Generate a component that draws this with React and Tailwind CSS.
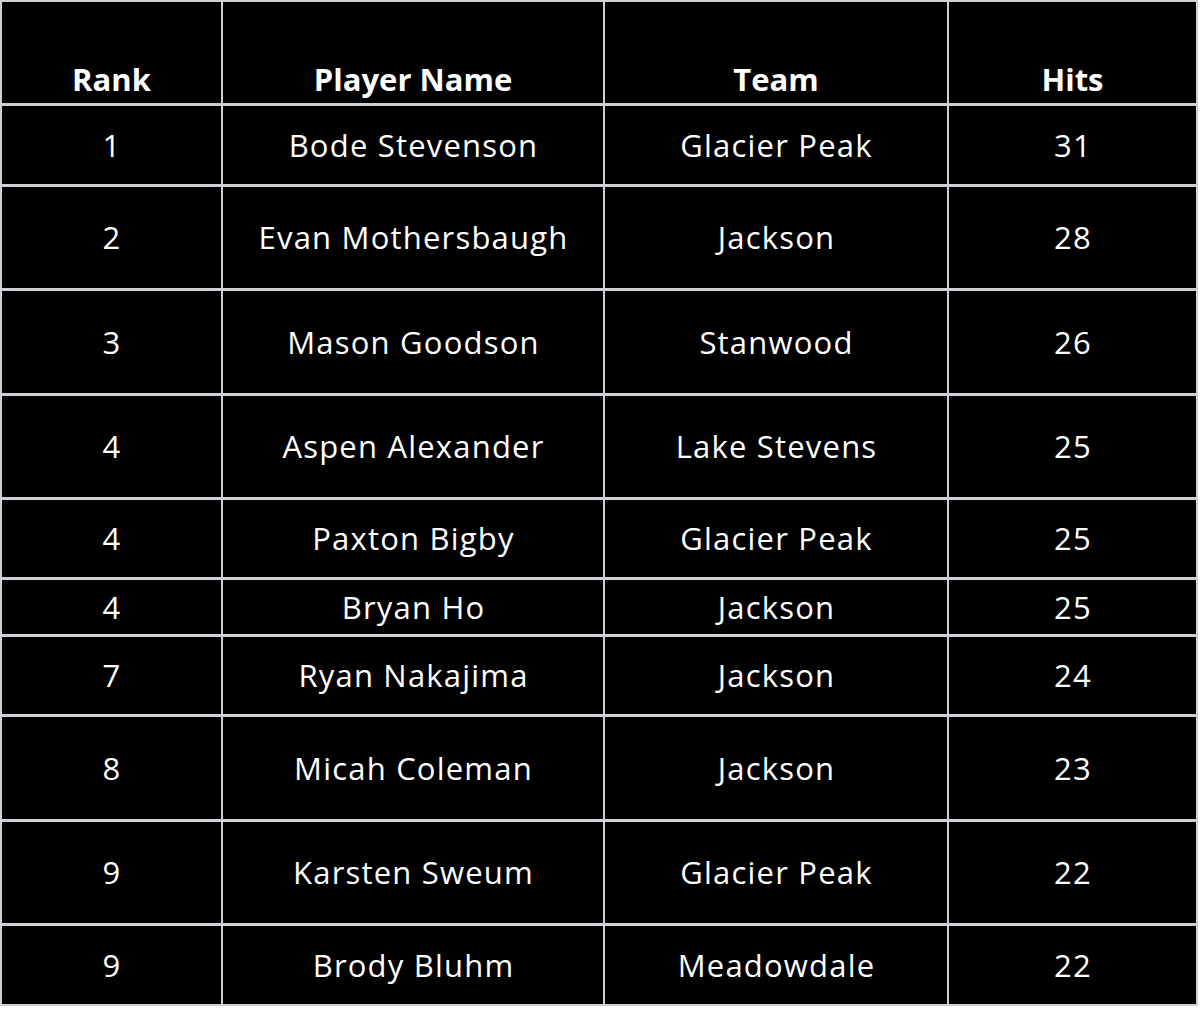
const rows = [
    { rank: '1', name: 'Bode Stevenson', team: 'Glacier Peak', hits: '31', h: 'h-[81px]' },
    { rank: '2', name: 'Evan Mothersbaugh', team: 'Jackson', hits: '28', h: 'h-[104px]' },
    { rank: '3', name: 'Mason Goodson', team: 'Stanwood', hits: '26', h: 'h-[105px]' },
    { rank: '4', name: 'Aspen Alexander', team: 'Lake Stevens', hits: '25', h: 'h-[104px]' },
    { rank: '4', name: 'Paxton Bigby', team: 'Glacier Peak', hits: '25', h: 'h-[80px]' },
    { rank: '4', name: 'Bryan Ho', team: 'Jackson', hits: '25', h: 'h-[57px]' },
    { rank: '7', name: 'Ryan Nakajima', team: 'Jackson', hits: '24', h: 'h-[80px]' },
    { rank: '8', name: 'Micah Coleman', team: 'Jackson', hits: '23', h: 'h-[105px]' },
    { rank: '9', name: 'Karsten Sweum', team: 'Glacier Peak', hits: '22', h: 'h-[104px]' },
    { rank: '9', name: 'Brody Bluhm', team: 'Meadowdale', hits: '22', h: 'h-[80px]' },
];

const cols = [
    'w-[223px] border-l-2',
    'w-[382px]',
    'w-[344px]',
    'w-[249px]',
];

export default function App() {
    return (
        <div className="bg-white min-h-screen font-['Open_Sans',sans-serif] text-white">
            <div className="w-[1198px] bg-black border-t-2 border-[#cfcfd6]">
                <div className="flex h-[104px] border-b-[3px] border-[#cfcfd6] font-bold text-[31px]">
                    {['Rank', 'Player Name', 'Team', 'Hits'].map((title, i) => (
                        <div
                            key={title}
                            className={`${cols[i]} border-r-2 border-[#cfcfd6] flex items-end justify-center pb-px`}
                        >
                            {title}
                        </div>
                    ))}
                </div>

                {rows.map((row, idx) => (
                    <div
                        key={row.name}
                        className={`flex ${row.h} ${
                            idx === rows.length - 1 ? 'border-b-2' : 'border-b-[3px]'
                        } border-[#cfcfd6] text-[31px] tracking-[1.2px]`}
                    >
                        {[row.rank, row.name, row.team, row.hits].map((value, i) => (
                            <div
                                key={i}
                                className={`${cols[i]} border-r-2 border-[#cfcfd6] flex items-center justify-center pl-[1px]`}
                            >
                                {value}
                            </div>
                        ))}
                    </div>
                ))}
            </div>
        </div>
    );
}
